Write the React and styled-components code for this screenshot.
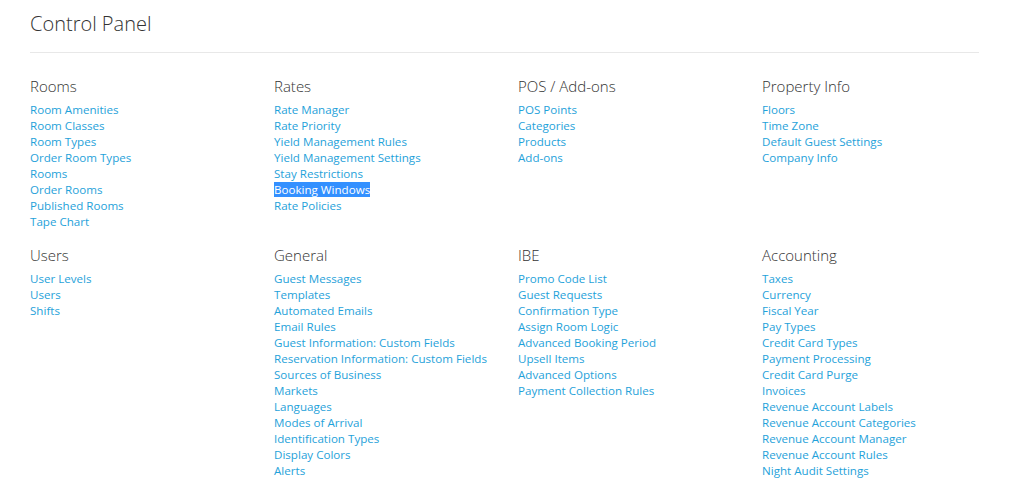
import React from "react";
import styled, { createGlobalStyle } from "styled-components";

const GlobalStyle = createGlobalStyle`
  body {
    margin: 0;
    background: #fff;
    font-family: "Open Sans", "Noto Sans", sans-serif;
    color: #333;
  }
`;

const Page = styled.div`
  padding: 0 32px 0 30px;
  width: 949px;
`;

const Title = styled.h1`
  margin: 0;
  padding-top: 10px;
  padding-bottom: 15px;
  font-size: 20px;
  line-height: 27px;
  font-weight: 300;
  color: #333;
  border-bottom: 1px solid #e8e8e8;
`;

const Grid = styled.div`
  display: grid;
  grid-template-columns: repeat(4, 244px);
  row-gap: 15px;
  padding-top: 23px;
`;

const Section = styled.section``;

const Heading = styled.h2`
  margin: 0 0 5px;
  font-size: 15px;
  line-height: 21px;
  font-weight: 300;
  color: #333;
`;

const LinkList = styled.ul`
  list-style: none;
  margin: 0;
  padding: 0;
`;

const Item = styled.li`
  font-size: 11.6px;
  line-height: 16px;
`;

const Link = styled.a`
  color: ${(p) => (p.$selected ? "#fff" : "#1fa2da")};
  background: ${(p) => (p.$selected ? "#3390ff" : "transparent")};
  text-decoration: none;
  cursor: pointer;
`;

const sections = [
  {
    title: "Rooms",
    links: ["Room Amenities", "Room Classes", "Room Types", "Order Room Types", "Rooms", "Order Rooms", "Published Rooms", "Tape Chart"],
  },
  {
    title: "Rates",
    links: ["Rate Manager", "Rate Priority", "Yield Management Rules", "Yield Management Settings", "Stay Restrictions", "Booking Windows", "Rate Policies"],
  },
  {
    title: "POS / Add-ons",
    links: ["POS Points", "Categories", "Products", "Add-ons"],
  },
  {
    title: "Property Info",
    links: ["Floors", "Time Zone", "Default Guest Settings", "Company Info"],
  },
  {
    title: "Users",
    links: ["User Levels", "Users", "Shifts"],
  },
  {
    title: "General",
    links: [
      "Guest Messages",
      "Templates",
      "Automated Emails",
      "Email Rules",
      "Guest Information: Custom Fields",
      "Reservation Information: Custom Fields",
      "Sources of Business",
      "Markets",
      "Languages",
      "Modes of Arrival",
      "Identification Types",
      "Display Colors",
      "Alerts",
    ],
  },
  {
    title: "IBE",
    links: ["Promo Code List", "Guest Requests", "Confirmation Type", "Assign Room Logic", "Advanced Booking Period", "Upsell Items", "Advanced Options", "Payment Collection Rules"],
  },
  {
    title: "Accounting",
    links: [
      "Taxes",
      "Currency",
      "Fiscal Year",
      "Pay Types",
      "Credit Card Types",
      "Payment Processing",
      "Credit Card Purge",
      "Invoices",
      "Revenue Account Labels",
      "Revenue Account Categories",
      "Revenue Account Manager",
      "Revenue Account Rules",
      "Night Audit Settings",
    ],
  },
];

const App = () => {
  return (
    <Page>
      <GlobalStyle />
      <Title>Control Panel</Title>
      <Grid>
        {sections.map((section) => (
          <Section key={section.title}>
            <Heading>{section.title}</Heading>
            <LinkList>
              {section.links.map((link) => (
                <Item key={link}>
                  <Link $selected={link === "Booking Windows"}>{link}</Link>
                </Item>
              ))}
            </LinkList>
          </Section>
        ))}
      </Grid>
    </Page>
  );
};

export default App;
